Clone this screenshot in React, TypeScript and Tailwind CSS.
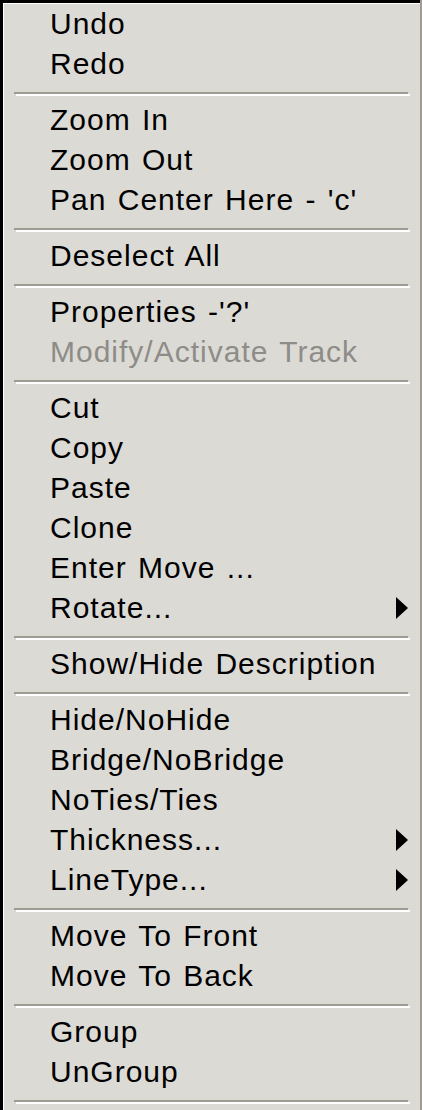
import React from "react";

type Entry =
  | { kind: "item"; label: string; disabled?: boolean; sub?: boolean }
  | { kind: "sep" };

const groups: { label: string; disabled?: boolean; sub?: boolean }[][] = [
  [{ label: "Undo" }, { label: "Redo" }],
  [{ label: "Zoom In" }, { label: "Zoom Out" }, { label: "Pan Center Here - 'c'" }],
  [{ label: "Deselect All" }],
  [{ label: "Properties -'?'" }, { label: "Modify/Activate Track", disabled: true }],
  [
    { label: "Cut" },
    { label: "Copy" },
    { label: "Paste" },
    { label: "Clone" },
    { label: "Enter Move ..." },
    { label: "Rotate...", sub: true },
  ],
  [{ label: "Show/Hide Description" }],
  [
    { label: "Hide/NoHide" },
    { label: "Bridge/NoBridge" },
    { label: "NoTies/Ties" },
    { label: "Thickness...", sub: true },
    { label: "LineType...", sub: true },
  ],
  [{ label: "Move To Front" }, { label: "Move To Back" }],
  [{ label: "Group" }, { label: "UnGroup" }],
];

const entries: Entry[] = groups.flatMap((g) => [
  ...g.map((i) => ({ kind: "item" as const, ...i })),
  { kind: "sep" as const },
]);

function Arrow() {
  return (
    <svg width="12" height="22" viewBox="0 0 12 22" className="shrink-0">
      <polygon points="0,0 12,11 0,22" fill="#000" />
    </svg>
  );
}

function Separator() {
  return (
    <div className="h-[16px] pt-[8px] px-[10px]">
      <div className="h-[2px] bg-[#9e9b94] mr-[2px]" />
      <div className="h-[2px] bg-white ml-[2px]" />
    </div>
  );
}

export default function App() {
  return (
    <div className="flex w-[422px] h-[1110px] overflow-hidden bg-black font-['Liberation_Sans',Arial,sans-serif]">
      <div className="flex-1 mt-[3px] ml-[3px] bg-[#dcdad5] border-t border-l border-white flex flex-col">
        {entries.map((e, idx) =>
          e.kind === "sep" ? (
            <Separator key={idx} />
          ) : (
            <div
              key={idx}
              className={
                "h-[40px] shrink-0 flex items-center justify-between pl-[46px] pr-[12px] text-[30px] leading-[40px] tracking-[1px] [word-spacing:2px] " +
                (e.disabled ? "text-[#8e8c88]" : "text-black")
              }
            >
              <span className="whitespace-pre">{e.label}</span>
              {e.sub && <Arrow />}
            </div>
          )
        )}
      </div>
      <div className="w-[2px] shrink-0 bg-[#9e9b94]" />
    </div>
  );
}
